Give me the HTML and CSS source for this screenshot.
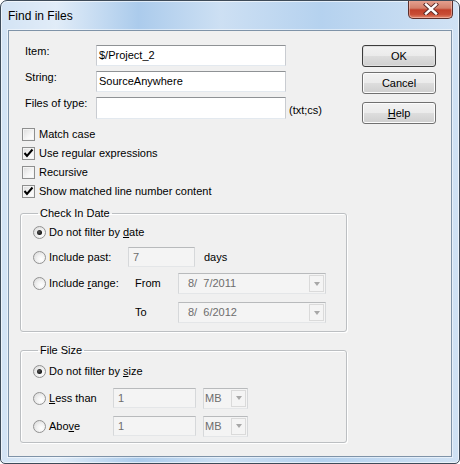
FILE: index.html
```html
<!DOCTYPE html>
<html>
<head>
<meta charset="utf-8">
<link rel="stylesheet" href="styles.css">
</head>
<body>
<div class="window">
  <div class="titlebar">
    <span class="title">Find in Files</span>
    <div class="close">
      <svg width="16" height="12" viewBox="0 0 16 12"><path d="M3 1.5 L13 10.5 M13 1.5 L3 10.5" stroke="#5a2a28" stroke-width="4.2" stroke-linecap="square"/><path d="M3 1.5 L13 10.5 M13 1.5 L3 10.5" stroke="#ffffff" stroke-width="2.4" stroke-linecap="square"/></svg>
    </div>
  </div>
  <div class="client">
    <div class="main">
      <div class="form">
        <span class="lbl">Item:</span><div class="tb">$/Project_2</div><span></span>
        <span class="lbl">String:</span><div class="tb">SourceAnywhere</div><span></span>
        <span class="lbl">Files of type:</span><div class="tb"></div><span class="hint">(txt;cs)</span>
      </div>
      <div class="checks">
        <div class="chk"><span class="box"></span><span>Match case</span></div>
        <div class="chk"><span class="box on"><svg width="11" height="11" viewBox="0 0 11 11"><path d="M1.5 5 L4 8 L9.5 1.5" fill="none" stroke="#000" stroke-width="2"/></svg></span><span>Use regular expressions</span></div>
        <div class="chk"><span class="box"></span><span>Recursive</span></div>
        <div class="chk"><span class="box on"><svg width="11" height="11" viewBox="0 0 11 11"><path d="M1.5 5 L4 8 L9.5 1.5" fill="none" stroke="#000" stroke-width="2"/></svg></span><span>Show matched line number content</span></div>
      </div>
      <fieldset class="group date">
        <legend>Check In Date</legend>
        <div class="row r1"><span class="radio on"></span><span>Do not filter by <u>d</u>ate</span></div>
        <div class="row r2"><span class="opt w95"><span class="radio"></span><span>Include past:</span></span><div class="dtb w67">7</div><span class="days">days</span></div>
        <div class="row r3"><span class="opt w102"><span class="radio"></span><span>Include <u>r</u>ange:</span></span><span class="sub">From</span><div class="combo w148"><span class="val">8/  7/2011</span><span class="drop"><i></i></span></div></div>
        <div class="row r4"><span class="opt w102"></span><span class="sub">To</span><div class="combo w148"><span class="val">8/  6/2012</span><span class="drop"><i></i></span></div></div>
      </fieldset>
      <fieldset class="group size">
        <legend>File Size</legend>
        <div class="row s1"><span class="radio on"></span><span>Do not filter by <u>s</u>ize</span></div>
        <div class="row s2"><span class="opt w80"><span class="radio"></span><span><u>L</u>ess than</span></span><div class="dtb w83">1</div><div class="combo mb"><span class="val">MB</span><span class="drop"><i></i></span></div></div>
        <div class="row s3"><span class="opt w80"><span class="radio"></span><span>Abo<u>v</u>e</span></span><div class="dtb w83">1</div><div class="combo mb"><span class="val">MB</span><span class="drop"><i></i></span></div></div>
      </fieldset>
    </div>
    <div class="buttons">
      <div class="btn default">OK</div>
      <div class="btn b2">Cancel</div>
      <div class="btn b3"><span><u>H</u>elp</span></div>
    </div>
  </div>
</div>
</body>
</html>
```
FILE: styles.css
```css
html, body {
  margin: 0;
  padding: 0;
  background: #ffffff;
}
body {
  font-family: "Liberation Sans", Arial, sans-serif;
  font-size: 11px;
  line-height: 13px;
  color: #000;
}
.window {
  width: 460px;
  height: 464px;
  box-sizing: border-box;
  border: 1px solid #3e4b59;
  border-radius: 7px 7px 5px 5px;
  background:
    linear-gradient(90deg, rgba(255,255,255,0.35) 0%, rgba(255,255,255,0.55) 12%, rgba(140,185,230,0.35) 30%, rgba(255,255,255,0.25) 48%, rgba(160,200,238,0.25) 70%, rgba(255,255,255,0.3) 100%),
    #bcd5ef;
  box-shadow: inset 0 0 0 1px rgba(255,255,255,0.6);
  padding: 0 7px 6px 7px;
  display: flex;
  flex-direction: column;
  overflow: hidden;
}
.titlebar {
  height: 29px;
  display: flex;
  align-items: flex-start;
  flex: none;
}
.title {
  font-family: "Liberation Sans", Arial, sans-serif;
  font-size: 12px;
  line-height: 14px;
  margin-top: 8px;
  color: #000;
}
.close {
  margin-left: auto;
  margin-top: -1px;
  margin-right: -1px;
  width: 45px;
  height: 19px;
  box-sizing: border-box;
  border: 1px solid #5b2f2c;
  border-top: none;
  border-radius: 0 0 5px 5px;
  background: linear-gradient(180deg, #e8a493 0%, #d4806b 45%, #c2402a 55%, #c84d35 80%, #e2876c 100%);
  box-shadow: inset 0 0 0 1px rgba(255,220,210,0.45);
  display: flex;
  align-items: center;
  justify-content: center;
}
.client {
  flex: 1;
  display: flex;
  background: #f0f0f0;
  border: 1px solid #7f93a8;
  box-shadow: 0 0 0 1px rgba(255,255,255,0.5);
}
.main {
  width: 327px;
  margin-left: 11px;
  padding-top: 14px;
}
.form {
  display: grid;
  grid-template-columns: 76px 190px auto;
  grid-template-rows: 21px 21px 22px;
  row-gap: 5px;
}
.lbl {
  padding-left: 5px;
  padding-top: 0;
}
.tb {
  box-sizing: border-box;
  background: #fff;
  border: 1px solid;
  border-color: #8f9295 #c9ccd1 #e3e9ef #c9ccd1;
  padding: 3px 2px 0;
  font-size: 11px;
  white-space: nowrap;
}
.hint {
  align-self: end;
  padding-left: 3px;
  padding-bottom: 2px;
}
.checks {
  margin-top: 6px;
}
.chk {
  height: 19px;
  display: flex;
  align-items: center;
  padding-left: 2px;
}
.box {
  width: 13px;
  height: 13px;
  box-sizing: border-box;
  border: 1px solid #8e8f8f;
  background: linear-gradient(135deg, #dcdcdc 0%, #f6f6f6 60%, #ffffff 100%);
  box-shadow: inset 0 0 0 1px #f4f4f4;
  margin-right: 4px;
  display: flex;
  align-items: center;
  justify-content: center;
  flex: none;
}
.group {
  margin: 0;
  box-sizing: border-box;
  width: 327px;
  border: 1px solid #bcbfc2;
  border-radius: 3px;
  box-shadow: inset 1px 1px 0 #fff, 1px 1px 0 #fff;
  padding: 0 0 0 12px;
  min-width: 0;
}
.group legend {
  padding: 0 2px;
  margin-left: 5px;
  line-height: 13px;
}
.date {
  margin-top: 6px;
  padding-top: 4px;
  padding-bottom: 8px;
}
.size {
  margin-top: 12px;
  padding-top: 6px;
  padding-bottom: 6px;
}
.row {
  display: flex;
  align-items: center;
}
.r1, .s1 { height: 16px; }
.r2 { margin-top: 7px; height: 20px; }
.r3 { margin-top: 6px; height: 21px; }
.r4 { margin-top: 8px; height: 21px; }
.s2 { margin-top: 9px; height: 20px; }
.s3 { margin-top: 8px; height: 20px; }
.opt {
  display: flex;
  align-items: center;
  flex: none;
}
.w95 { width: 95px; }
.w102 { width: 102px; }
.w80 { width: 80px; }
.w67 { width: 67px; }
.w83 { width: 83px; }
.w148 { width: 148px; }
.radio {
  width: 13px;
  height: 13px;
  box-sizing: border-box;
  border-radius: 50%;
  border: 1px solid #929292;
  background: radial-gradient(circle at 65% 65%, #ffffff 0%, #f2f2f2 40%, #d4d4d4 100%);
  margin-right: 3px;
  flex: none;
  display: flex;
  align-items: center;
  justify-content: center;
}
.radio.on::after {
  content: "";
  width: 5px;
  height: 5px;
  border-radius: 50%;
  background: radial-gradient(circle at 40% 40%, #555 0%, #111 70%);
}
.dtb {
  box-sizing: border-box;
  height: 20px;
  border: 1px solid;
  border-color: #b8babc #d6d8da #e4e6e8 #d6d8da;
  background: #f4f4f4;
  color: #6d6d6d;
  padding: 3px 4px 0;
  flex: none;
}
.days {
  margin-left: 9px;
}
.sub {
  width: 43px;
  flex: none;
}
.combo {
  box-sizing: border-box;
  height: 21px;
  border: 1px solid;
  border-color: #b8babc #d6d8da #e4e6e8 #d6d8da;
  background: #f4f4f4;
  color: #6d6d6d;
  display: flex;
  align-items: stretch;
  flex: none;
}
.combo .val {
  flex: 1;
  padding: 3px 0 0 9px;
  white-space: pre;
}
.combo .drop {
  width: 15px;
  margin: 1px 1px 1px 0;
  box-sizing: border-box;
  border: 1px solid #dadada;
  background: #f4f4f4;
  display: flex;
  align-items: center;
  justify-content: center;
}
.combo .drop i {
  width: 0;
  height: 0;
  border-left: 3.5px solid transparent;
  border-right: 3.5px solid transparent;
  border-top: 4px solid #a7a7a7;
}
.combo.mb {
  width: 45px;
  height: 21px;
  margin-left: 7px;
}
.combo.mb .val {
  padding-left: 1px;
}
.buttons {
  margin-left: 15px;
  padding-top: 14px;
  width: 74px;
}
.btn {
  box-sizing: border-box;
  width: 74px;
  height: 22px;
  border: 1px solid #707070;
  border-radius: 3px;
  background: linear-gradient(180deg, #f2f2f2 0%, #ebebeb 48%, #dddddd 52%, #cfcfcf 100%);
  box-shadow: inset 0 0 0 1px #fcfcfc;
  display: flex;
  align-items: center;
  justify-content: center;
}
.btn.default {
  border-color: #3c3c3c;
  box-shadow: inset 0 0 0 1px #e0e0e0;
}
.b2 { margin-top: 5px; }
.b3 { margin-top: 8px; }
u { text-decoration: underline; text-underline-offset: 1px; }
```
